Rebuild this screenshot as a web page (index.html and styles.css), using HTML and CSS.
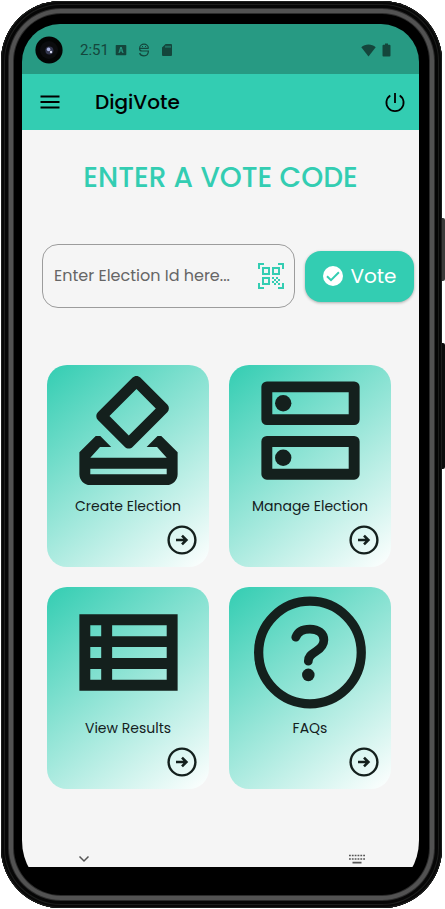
FILE: index.html
```html
<!DOCTYPE html>
<html lang="en">
<head>
<meta charset="utf-8">
<meta name="viewport" content="width=device-width, initial-scale=1">
<title>DigiVote</title>
<link rel="stylesheet" href="styles.css">
</head>
<body>
<svg class="defs" aria-hidden="true">
  <symbol id="go" viewBox="0 0 30 30">
    <circle cx="15" cy="15" r="13.4" fill="none" stroke="currentColor" stroke-width="2.4"/>
    <path d="M9 15H19M15 10.6L19.4 15L15 19.4" fill="none" stroke="currentColor" stroke-width="2.6"/>
  </symbol>
</svg>
<div class="phone">
  <span class="key key-power"></span>
  <span class="key key-volume"></span>
  <div class="screen">
    <div class="status">
      <svg class="camera" viewBox="0 0 28 28" aria-hidden="true">
        <circle cx="14" cy="14" r="13.6" fill="#030504"/>
        <circle cx="14" cy="14" r="9" fill="#0b0c0e"/>
        <circle cx="14.4" cy="14.4" r="4" fill="#34374f"/>
        <circle cx="13.6" cy="13.4" r="1.8" fill="#a9b1dc"/>
        <circle cx="16" cy="16" r="1.2" fill="#d5d8ee"/>
      </svg>
      <span class="time">2:51</span>
      <svg class="s-icon" viewBox="0 0 12 14" aria-hidden="true"><path fill="currentColor" fill-rule="evenodd" d="M1.500 2h9a.8.8 0 0 1 .8.8v8.700a.8.8 0 0 1-.8.8h-9a.8.8 0 0 1-.8-.8V2.800a.8.8 0 0 1 .8-.8zM5.300 4L3.400 10h1.200l.4-1.400h2L7.400 10h1.200L6.700 4zm.7 1.500l.6 2H5.400z"/></svg>
      <svg class="s-icon" viewBox="0 0 12 14" aria-hidden="true"><path fill="none" stroke="currentColor" stroke-width="1.200" d="M10.400 5.400H1.600A4.400 4.300 0 0 1 10.400 5.400M1.600 5.400C1.600 7.400 2.600 8 4 8H10.400C10.400 11 8.600 12.800 6 12.800S2 11.400 1.600 10"/><path fill="currentColor" d="M4 3h1v1H4zM7 3h1v1H7z"/></svg>
      <svg class="s-icon" viewBox="0 0 12 14" aria-hidden="true"><path fill="currentColor" fill-rule="evenodd" d="M4.600 1H10a1 1 0 0 1 1 1v10a1 1 0 0 1-1 1H2a1 1 0 0 1-1-1V4.600zM4.500 2.800v2h1v-2zm2 0v2h1v-2zm2 0v2h1v-2z"/></svg>
      <span class="spacer"></span>
      <svg class="wifi" viewBox="0 0 15 13" aria-hidden="true"><path fill="currentColor" d="M7.500 12.500L.3 3.200C2.300 1.500 4.800.5 7.500.5s5.200 1 7.200 2.700z"/></svg>
      <svg class="battery" viewBox="0 0 9 14" aria-hidden="true"><path fill="currentColor" d="M3 .5h3v1.200h1.500a1 1 0 0 1 1 1V12.500a1 1 0 0 1-1 1h-6a1 1 0 0 1-1-1V2.700a1 1 0 0 1 1-1H3z"/></svg>
    </div>
    <header class="appbar">
      <button class="icon-btn" type="button" aria-label="Menu"><svg viewBox="0 0 24 24"><path d="M2.500 6.500h19M2.500 12h19M2.500 17.500h19" fill="none" stroke="currentColor" stroke-width="2"/></svg></button>
      <span class="brand">DigiVote</span>
      <button class="icon-btn" type="button" aria-label="Log out"><svg viewBox="0 0 24 24"><path d="M12 3v10M7.300 5.400a8.600 8.600 0 1 0 9.400 0" fill="none" stroke="currentColor" stroke-width="1.800"/></svg></button>
    </header>
    <main>
      <h1>ENTER A VOTE CODE</h1>
      <form class="vote">
        <div class="field">
          <input type="text" aria-label="Election Id" placeholder="Enter Election Id here...">
          <button class="scan" type="button" aria-label="Scan QR code">
            <svg viewBox="0 0 26 26"><g fill="none" stroke="currentColor" stroke-width="2"><path d="M1 6V1h5M20 1h5v5M1 20v5h5M20 25h5v-5"/><path d="M5 5h6v6H5zM15 5h6v6h-6zM5 15h6v6H5z"/></g><path fill="currentColor" d="M14 14h2v2h-2zM18 14h2v2h-2zM16 16h2v2h-2zM20 16h2v2h-2zM14 18h2v2h-2zM18 18h2v2h-2zM16 20h2v2h-2zM20 20h2v2h-2z"/></svg>
          </button>
        </div>
        <button class="submit" type="button">
          <svg viewBox="0 0 20 20" aria-hidden="true"><circle cx="10" cy="10" r="10" fill="#fff"/><path d="M4 10.200l4 4 7.900-8" fill="none" stroke="#33cdb2" stroke-width="2"/></svg>
          Vote
        </button>
      </form>
      <nav class="cards">
        <a class="card" href="#create">
          <svg class="pic" viewBox="0 0 24 24" aria-hidden="true"><path fill="currentColor" d="M18 13h-.68l-2 2h1.910L19 17H5l1.780-2h2.050l-2-2H6l-3 3v4c0 1.100.89 2 1.990 2H19c1.100 0 2-.89 2-2v-4l-3-3zm1 7H5v-1h14v1zm-7.660-4.980c.39.39 1.020.39 1.410 0l6.360-6.360c.39-.39.39-1.020 0-1.410L14.160 2.300c-.38-.4-1.010-.4-1.400-.01L6.390 8.650c-.39.39-.39 1.020 0 1.410l4.950 4.960zm2.120-10.610L17 7.950l-4.950 4.950-3.540-3.540 4.950-4.950z"/></svg>
          <span class="label">Create Election</span>
          <svg class="go" aria-hidden="true"><use href="#go"/></svg>
        </a>
        <a class="card" href="#manage">
          <svg class="pic" viewBox="0 0 24 24" aria-hidden="true"><path fill="none" stroke="currentColor" stroke-width="2" stroke-linejoin="round" d="M4 4h16v6H4zM4 14h16v6H4z"/><circle cx="7" cy="7" r="1.500" fill="currentColor"/><circle cx="7" cy="17" r="1.500" fill="currentColor"/></svg>
          <span class="label">Manage Election</span>
          <svg class="go" aria-hidden="true"><use href="#go"/></svg>
        </a>
        <a class="card" href="#results">
          <svg class="pic" viewBox="0 0 24 24" aria-hidden="true"><path fill="currentColor" fill-rule="evenodd" d="M3 5h18v14H3zM5 7v2h2V7zM9 7v2h10V7zM5 11v2h2v-2zM9 11v2h10v-2zM5 15v2h2v-2zM9 15v2h10v-2z"/></svg>
          <span class="label">View Results</span>
          <svg class="go" aria-hidden="true"><use href="#go"/></svg>
        </a>
        <a class="card" href="#faqs">
          <svg class="pic" viewBox="0 0 24 24" aria-hidden="true"><circle cx="11.900" cy="12" r="9.400" fill="none" stroke="currentColor" stroke-width="1.700"/><path d="M9.300 9.200C9.700 8.100 10.700 7.700 11.900 7.700c1.500 0 2.550.75 2.550 2 0 1-.6 1.550-1.450 2.100-.95.600-1.400 1-1.400 1.800" fill="none" stroke="currentColor" stroke-width="1.600" stroke-linecap="round"/><circle cx="11.600" cy="16.100" r="1.150" fill="currentColor"/></svg>
          <span class="label">FAQs</span>
          <svg class="go" aria-hidden="true"><use href="#go"/></svg>
        </a>
      </nav>
    </main>
    <div class="sysnav">
      <svg class="chev" viewBox="0 0 12 8" aria-hidden="true"><path d="M1.500 1.500L6 6l4.500-4.500" fill="none" stroke="currentColor" stroke-width="1.500"/></svg>
      <svg class="keys" viewBox="0 0 16 10" aria-hidden="true"><path d="M0 1.500h16M0 5h16" fill="none" stroke="currentColor" stroke-width="1.600" stroke-dasharray="1.800 1.040"/><path d="M3.500 8.600h9" stroke="currentColor" stroke-width="1.600"/></svg>
    </div>
    <div class="chin"></div>
  </div>
</div>
</body>
</html>
```
FILE: styles.css
```css
* {
  box-sizing: border-box;
}

body {
  margin: 0;
  background: #fff;
  color: #14201d;
  font-family: Poppins, Inter, sans-serif;
}

button,
input {
  font: inherit;
  color: inherit;
  border: 0;
  padding: 0;
  background: none;
}

svg {
  display: block;
  flex: none;
}

.defs {
  position: absolute;
  width: 0;
  height: 0;
}

.phone {
  position: relative;
  margin: 1px 3px 1px 1px;
  padding: 23px 23px 24px 21px;
  border-radius: 60px;
  background: #000;
  box-shadow:
    inset 0 0 0 1px #1c1d1c,
    inset 0 0 0 3px #080808,
    inset 0 0 0 4px #1d1e1d,
    inset 0 0 0 7px #060606,
    inset 0 0 0 8px #2c2c2c,
    inset 0 0 0 12px #525252,
    inset 0 0 0 13px #2c2c2c;
}

.key {
  position: absolute;
  left: 100%;
  width: 3px;
  border-radius: 0 2px 2px 0;
  background: #0c0c0c;
}

.key-power {
  top: 217px;
  height: 63px;
  background: #3c3b3a;
}

.key-volume {
  top: 342px;
  height: 126px;
}

.screen {
  overflow: hidden;
  border-radius: 38px 38px 30px 30px / 38px 38px 44px 44px;
}

main,
.sysnav {
  background: #f5f5f5;
}

.status {
  display: flex;
  align-items: center;
  height: 50px;
  padding: 2px 28px 0 13px;
  background: #279a83;
  color: #14463c;
}

.camera {
  width: 28px;
  height: 28px;
  margin-right: 17px;
}

.time {
  margin-right: 6px;
  font: 15px/20px Roboto, sans-serif;
}

.s-icon {
  width: 12px;
  height: 14px;
  margin-right: 11px;
}

.spacer {
  flex: 1;
}

.wifi {
  width: 15px;
  height: 13px;
  margin-right: 6px;
}

.battery {
  width: 9px;
  height: 14px;
}

.appbar {
  display: flex;
  align-items: center;
  height: 56px;
  padding: 0 12px 0 16px;
  background: #33cdb2;
  color: #000;
}

.icon-btn svg {
  width: 24px;
  height: 24px;
}

.brand {
  flex: 1;
  margin-left: 33px;
  font-size: 20px;
  font-weight: 500;
  line-height: 28px;
}

h1 {
  margin: 0;
  padding-top: 25px;
  color: #33cdb2;
  font-size: 28px;
  font-weight: 500;
  line-height: 46px;
  text-align: center;
}

.vote {
  display: flex;
  align-items: center;
  gap: 10px;
  margin: 43px 5px 0 20px;
}

.field {
  display: flex;
  flex: 1;
  align-items: center;
  min-width: 0;
  height: 64px;
  padding: 0 10px 0 11px;
  border: 1px solid #9c9c9c;
  border-radius: 16px;
}

.field input {
  flex: 1;
  min-width: 0;
  font-size: 16px;
  line-height: 24px;
  outline: 0;
}

.field input::placeholder {
  color: #666;
  opacity: 1;
}

.scan {
  color: #33cdb2;
}

.scan svg {
  width: 26px;
  height: 26px;
}

.submit {
  display: flex;
  align-items: center;
  justify-content: center;
  gap: 8px;
  width: 109px;
  height: 51px;
  border-radius: 16px;
  background: #33cdb2;
  box-shadow: 0 1px 3px rgba(0, 0, 0, 0.3);
  color: #fff;
  font-size: 20px;
}

.submit svg {
  width: 20px;
  height: 20px;
}

.cards {
  display: grid;
  grid-template-columns: 1fr 1fr;
  gap: 20px;
  margin: 57px 28px 0 25px;
}

.card {
  display: flex;
  flex-direction: column;
  align-items: center;
  padding-bottom: 12px;
  border-radius: 20px;
  background: linear-gradient(141deg, #33cdb2, #fff);
  color: #14201d;
  text-decoration: none;
}

.pic {
  width: 131px;
  height: 131px;
}

.label {
  font-size: 14px;
  line-height: 20px;
}

.go {
  align-self: flex-end;
  width: 30px;
  height: 30px;
  margin: 9px 12px 0 0;
}

.sysnav {
  display: flex;
  align-items: center;
  justify-content: space-between;
  height: 16px;
  padding: 0 54px 0 56px;
  color: #555;
}

main {
  padding-bottom: 62px;
}

.chev {
  width: 12px;
  height: 8px;
}

.keys {
  width: 16px;
  height: 10px;
}

.chin {
  height: 17px;
  background: #000;
}
```
